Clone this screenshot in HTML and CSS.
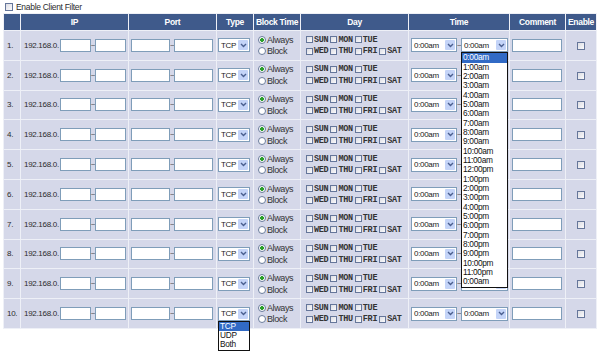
FILE: index.html
```html
<!DOCTYPE html>
<html lang="en">
<head>
  <meta charset="UTF-8" />
  <title>Client Filter</title>
  <link rel="stylesheet" href="styles.css">
</head>
<body>
  <div class="top"><input type="checkbox" class="cb"><span>Enable Client Filter</span></div>
  <table class="filter">
    <colgroup>
      <col style="width:16px"><col style="width:107px"><col style="width:87px"><col style="width:36px"><col style="width:46px">
      <col style="width:107px"><col style="width:100px"><col style="width:55px"><col style="width:30px">
    </colgroup>
    <thead>
      <tr><th></th><th>IP</th><th>Port</th><th>Type</th><th>Block Time</th><th>Day</th><th>Time</th><th>Comment</th><th>Enable</th></tr>
    </thead>
    <tbody id="rows"></tbody>
  </table>

  <script>
    // build the 10 filter rows
    const rows = document.getElementById('rows');
    const days = [['SUN', 'MON', 'TUE'], ['WED', 'THU', 'FRI', 'SAT']];
    const hours = ['0:00am'];
    for (let h = 1; h <= 11; h++) hours.push(h + ':00am');
    hours.push('12:00pm');
    for (let h = 1; h <= 11; h++) hours.push(h + ':00pm');
    hours.push('0:00am');

    function arrow() {
      return '<span class="arr"><svg width="7" height="5" viewBox="0 0 7 5"><path d="M1 1l2.5 2.5L6 1" fill="none" stroke="#4a5f8f" stroke-width="1.4"/></svg></span>';
    }
    function list(items) {
      return '<div class="list">' + items.map((t, i) => '<div class="opt' + (i === 0 ? ' hi' : '') + '">' + t + '</div>').join('') + '</div>';
    }
    function dayLines() {
      return days.map(line => '<div class="dl">' + line.map(d => '<input type="checkbox" class="cb sm"><b>' + d + '</b>').join('') + '</div>').join('');
    }

    for (let i = 1; i <= 10; i++) {
      // rows 2-9: the second time box sits under the open list
      const hidden = i > 1 && i < 10;
      const tr = document.createElement('tr');
      tr.innerHTML =
        '<td class="num">' + i + '.</td>' +
        '<td><div class="cell ipc"><span class="pre">192.168.0.</span><input class="inp ip"><span class="til">~</span><input class="inp ip"></div></td>' +
        '<td><div class="cell portc"><input class="inp port"><span class="til">~</span><input class="inp port"></div></td>' +
        '<td><div class="cell typec"><span class="sel type"><span class="val">TCP</span>' + arrow() + (i === 10 ? list(['TCP', 'UDP', 'Both']) : '') + '</span></div></td>' +
        '<td class="bt"><div class="rl"><span class="radio on"></span>Always</div><div class="rl"><span class="radio"></span>Block</div></td>' +
        '<td class="day">' + dayLines() + '</td>' +
        '<td><div class="cell timec"><span class="sel time"><span class="val">0:00am</span>' + arrow() + '</span><span class="til">~</span>' +
          '<span class="sel time2"><span class="val">' + (hidden ? '' : '0:00am') + '</span>' + arrow() + (i === 1 ? list(hours) : '') + '</span></div></td>' +
        '<td><div class="cell cmtc"><input class="inp cmt"></div></td>' +
        '<td class="en"><input type="checkbox" class="cb"></td>';
      rows.appendChild(tr);
    }
  </script>
</body>
</html>
```

FILE: styles.css
```css
body { margin: 0; min-height: 355px; font-family: "Liberation Sans", Arial, sans-serif; font-size: 8px; letter-spacing: -0.3px; color: #2b2b2b; background: #fff; }
.top { display: flex; align-items: center; gap: 3px; height: 13px; padding-left: 5px; font-size: 8.5px; }

.cb { -webkit-appearance: none; appearance: none; margin: 0; width: 8px; height: 8px; border: 1px solid #65769a; background: linear-gradient(135deg, #dcdde3, #fbfbfd); box-sizing: border-box; flex: none; }
.cb.sm { width: 7px; height: 7px; margin-right: 1px; }

.filter { border-collapse: separate; border-spacing: 1px; background: #eef0f7; margin-left: 3px; width: 594px; table-layout: fixed; }
.filter th { height: 16px; padding: 0; background: #3f5a8b; color: #fff; font-size: 8.5px; font-weight: bold; text-align: center; }
.filter td { height: 28.8px; padding: 0; background: #d5d8e9; }
.filter td.num { padding-left: 3px; }

.cell { display: flex; align-items: center; }
.ipc { padding-left: 3px; }
.portc, .timec, .cmtc { padding-left: 2px; }
.typec { padding-left: 1px; }
.pre { margin-right: 1px; white-space: nowrap; }
.til { width: 4px; text-align: center; color: #444; }

.inp { height: 13px; padding: 0; margin: 0; border: 1px solid #7f9db9; background: #fff; box-sizing: border-box; outline: none; }
.inp.ip { width: 31px; }
.inp.port { width: 39px; }
.inp.cmt { width: 50px; }

.sel { position: relative; display: flex; align-items: center; height: 14px; padding: 0 1px 0 2px; border: 1px solid #7f9db9; background: #fff; box-sizing: border-box; color: #222; }
.sel .val { flex: 1; }
.sel.type { width: 32px; }
.sel.time { width: 46px; }
.sel.time2 { width: 47px; }
.arr { display: flex; align-items: center; justify-content: center; width: 10px; height: 10px; background: #c4d4f8; border-radius: 1px; }

.list { position: absolute; left: -1px; right: -1px; top: calc(100% + 1px); z-index: 10; border: 1px solid #111; background: #fff; }
.opt { height: 9.33px; line-height: 9.33px; padding-left: 1px; font-size: 8.3px; color: #111; white-space: nowrap; }
.opt.hi { background: #316ac5; color: #fff; }

.bt { padding-left: 4px !important; }
.rl { display: flex; align-items: center; gap: 1px; height: 11.5px; font-size: 9px; letter-spacing: -0.4px; color: #333; }
.radio { width: 8px; height: 8px; border: 1px solid #6b7d9c; border-radius: 50%; background: #fff; box-sizing: border-box; }
.radio.on { background: radial-gradient(circle, #2b9f2b 0 1.6px, #fff 2.2px); }

.day { padding-left: 5px !important; }
.dl { display: flex; align-items: center; height: 11.5px; }
.dl b { font-family: "Liberation Mono", "Courier New", monospace; font-size: 8.5px; letter-spacing: -0.3px; margin-right: 2px; color: #333; }

.en { text-align: center; }
.en .cb { vertical-align: middle; }
```
